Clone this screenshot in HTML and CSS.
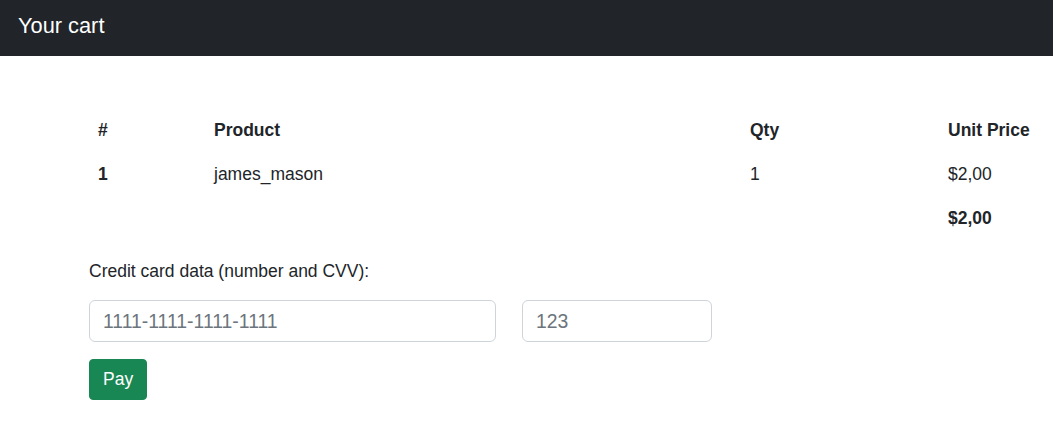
FILE: index.html
```html
<!DOCTYPE html>
<html>
<head>
<meta charset="utf-8">
<link rel="stylesheet" href="styles.css">
</head>
<body>
<nav class="navbar"><span class="brand">Your cart</span></nav>
<main class="container">
  <table class="cart">
    <colgroup><col class="c1"><col class="c2"><col class="c3"><col class="c4"></colgroup>
    <thead>
      <tr><th>#</th><th>Product</th><th>Qty</th><th>Unit Price</th></tr>
    </thead>
    <tbody>
      <tr><th>1</th><td>james_mason</td><td>1</td><td>$2,00</td></tr>
      <tr><td></td><td></td><td></td><th>$2,00</th></tr>
    </tbody>
  </table>
  <form class="pay-form">
    <label class="label">Credit card data (number and CVV):</label>
    <div class="inputs">
      <input class="field card" type="text" placeholder="1111-1111-1111-1111">
      <input class="field cvv" type="text" placeholder="123">
    </div>
    <button class="btn" type="button">Pay</button>
  </form>
</main>
</body>
</html>
```
FILE: styles.css
```css
* { box-sizing: border-box; }
body {
  margin: 0;
  font-family: "Liberation Sans", Arial, sans-serif;
  font-size: 17.5px;
  line-height: 24px;
  color: #212529;
  background: #fff;
  overflow: hidden;
}
.navbar {
  height: 56px;
  background: #212529;
  display: flex;
  align-items: center;
  padding: 0 18px;
}
.brand {
  color: #fff;
  font-size: 21.8px;
  line-height: 30px;
  margin-top: -4px;
}
.container {
  padding: 52px 0 0 89px;
}
.cart {
  border-collapse: collapse;
  width: 980px;
}
.c1 { width: 116px; }
.c2 { width: 536px; }
.c3 { width: 198px; }
.cart th, .cart td {
  padding: 10px 9px;
  text-align: left;
  vertical-align: top;
  line-height: 24px;
  height: 44px;
}
.cart th { font-weight: bold; }
.pay-form {
  display: flex;
  flex-direction: column;
  align-items: flex-start;
  padding-top: 19px;
}
.label { display: block; }
.inputs {
  display: flex;
  gap: 26px;
  margin-top: 17px;
}
.field {
  height: 42px;
  border: 1px solid #ced4da;
  border-radius: 6px;
  padding: 7px 13px;
  font-family: "Liberation Sans", Arial, sans-serif;
  font-size: 19.4px;
  color: #212529;
  background: #fff;
}
.field::placeholder { color: #6c757d; }
.card { width: 407px; }
.cvv { width: 190px; }
.btn {
  margin-top: 17px;
  height: 41px;
  padding: 0 13px;
  background: #198754;
  color: #fff;
  border: 1px solid #198754;
  border-radius: 4px;
  font-family: inherit;
  font-size: 17.5px;
}
```
